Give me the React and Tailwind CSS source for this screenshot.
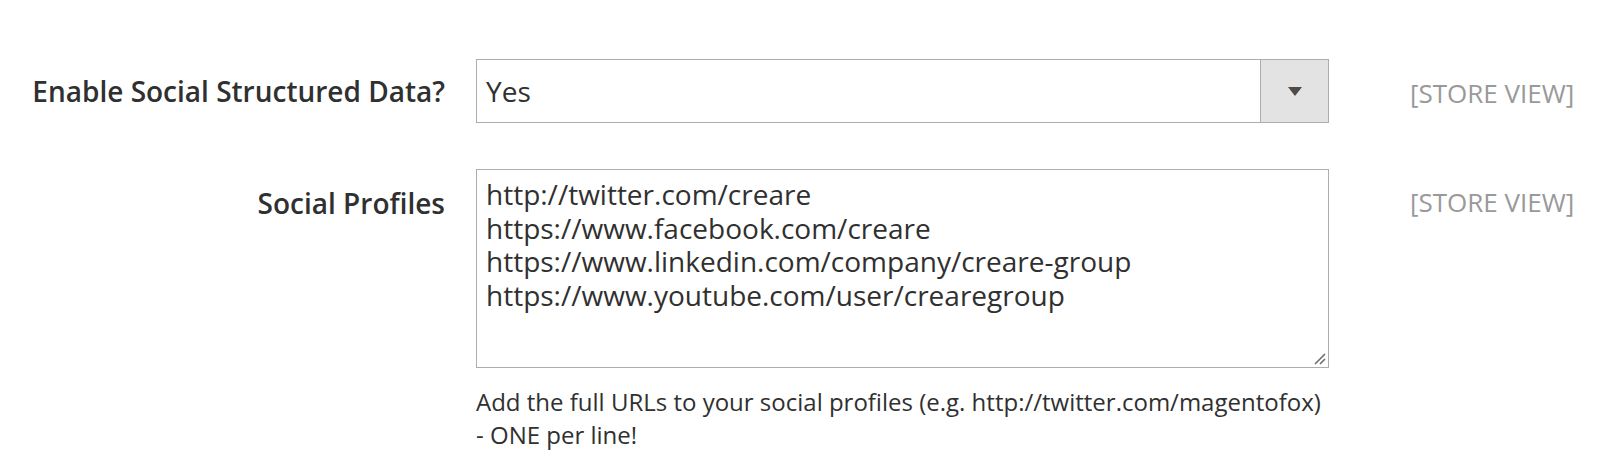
export default function App() {
  const profiles = [
    'http://twitter.com/creare',
    'https://www.facebook.com/creare',
    'https://www.linkedin.com/company/creare-group',
    'https://www.youtube.com/user/crearegroup',
  ];

  return (
    <div className="min-h-screen bg-white text-[#303030]" style={{ fontFamily: '"Open Sans", "Liberation Sans", sans-serif' }}>
      <div className="pt-[59px] flex flex-col gap-[46px]">
        {/* row 1 */}
        <div className="flex items-center">
          <div className="w-[445px] text-right text-[28px] font-semibold leading-none">Enable Social Structured Data?</div>
          <div className="ml-[31px] w-[853px] h-[64px] border-[1.5px] border-[#adadad] flex">
            <div className="flex-1 flex items-center pl-[9px] text-[28px]">Yes</div>
            <div className="w-[68px] bg-[#e3e3e3] border-l-[1.5px] border-[#adadad] flex items-center justify-center">
              <svg width="14" height="9" viewBox="0 0 14 9">
                <path d="M0 0 L14 0 L7 9 Z" fill="#514943" />
              </svg>
            </div>
          </div>
          <div className="ml-[81px] text-[26px] text-[#999999] leading-none pt-[3px]">[STORE VIEW]</div>
        </div>

        {/* row 2 */}
        <div className="flex items-start">
          <div className="w-[445px] text-right text-[28px] font-semibold leading-none pt-[20px]">Social Profiles</div>
          <div className="ml-[31px] w-[853px] flex flex-col">
            <div className="relative h-[199px] border-[1.5px] border-[#adadad] pl-[9px] pt-[8px] text-[28px] leading-[33.5px]">
              {profiles.map((p) => (
                <div key={p}>{p}</div>
              ))}
              <svg className="absolute right-[2px] bottom-[2px]" width="14" height="14" viewBox="0 0 14 14">
                <path d="M13 3 L3 13 M13 8 L8 13" stroke="#6e6e6e" strokeWidth="1.6" />
              </svg>
            </div>
            <div className="mt-[17px] text-[24px] leading-[33px]">
              Add the full URLs to your social profiles (e.g. http://twitter.com/magentofox)
              <br />- ONE per line!
            </div>
          </div>
          <div className="ml-[81px] text-[26px] text-[#999999] leading-none pt-[20px]">[STORE VIEW]</div>
        </div>
      </div>
    </div>
  );
}
